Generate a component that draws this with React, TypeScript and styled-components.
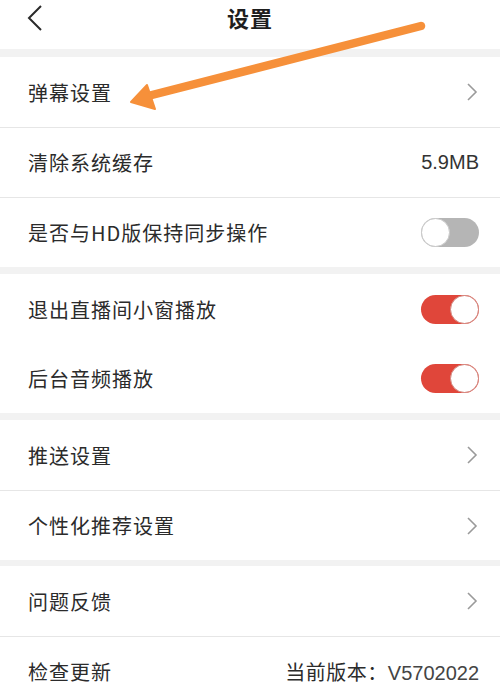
import React from "react";
import styled, { createGlobalStyle } from "styled-components";

const Global = createGlobalStyle`
  html, body { margin: 0; padding: 0; background: #ffffff; }
  body { font-family: "Noto Sans CJK SC", "Noto Sans", sans-serif; }
`;

const Page = styled.div`
  position: relative;
  width: 500px;
  height: 700px;
  overflow: hidden;
  background: #ffffff;
`;

const Header = styled.div`
  height: 49px;
  display: flex;
  align-items: flex-start;
  justify-content: center;
  position: relative;
  background: #fff;
`;

const Title = styled.div`
  font-size: 22px;
  font-weight: 700;
  color: #1e1e1e;
  line-height: 34px;
  letter-spacing: 1px;
`;

const BackButton = styled.div`
  position: absolute;
  left: 26px;
  top: 4px;
  width: 18px;
  height: 28px;
  display: flex;
`;

const Gap = styled.div<{ $h: number }>`
  height: ${(p) => p.$h}px;
  background: #f2f2f2;
`;

const Group = styled.div`
  background: #fff;
  & > div + div {
    border-top: 1px solid #e6e6e6;
  }
`;

const Row = styled.div<{ $h?: number; $noLine?: boolean }>`
  height: ${(p) => p.$h ?? 70}px;
  box-sizing: border-box;
  display: flex;
  align-items: center;
  justify-content: space-between;
  padding: 0 21px 0 28px;
  ${(p) => (p.$noLine ? "border-top: none !important;" : "")}
`;

const Label = styled.span`
  font-size: 20px;
  letter-spacing: 1px;
  color: #2b2b2b;
`;

const Value = styled.span`
  font-family: "Liberation Sans", "Noto Sans CJK SC", sans-serif;
  font-size: 20px;
  color: #333;
`;

const Version = styled.span`
  font-size: 20px;
  color: #2b2b2b;
  letter-spacing: 0.5px;
  & b {
    font-weight: 400;
    font-family: "Liberation Sans", sans-serif;
    letter-spacing: 0;
    color: #444;
  }
`;

const Track = styled.div<{ $on: boolean }>`
  width: 58px;
  height: 29px;
  border-radius: 15px;
  background: ${(p) => (p.$on ? "#e0463a" : "#b5b5b5")};
  display: flex;
  align-items: center;
  justify-content: ${(p) => (p.$on ? "flex-end" : "flex-start")};
  box-sizing: border-box;
`;

const Knob = styled.div<{ $on: boolean }>`
  width: 29px;
  height: 29px;
  border-radius: 50%;
  background: #fff;
  box-sizing: border-box;
  border: 1.5px solid ${(p) => (p.$on ? "#d2857d" : "#c9c9c9")};
`;

const ArrowLayer = styled.svg`
  position: absolute;
  left: 0;
  top: 0;
  pointer-events: none;
`;

const Chevron = () => (
  <svg width="14" height="20" viewBox="0 0 14 20">
    <path d="M3 2 L11 10 L3 18" fill="none" stroke="#9a9a9a" strokeWidth="1.6" />
  </svg>
);

const Toggle = ({ on }: { on: boolean }) => (
  <Track $on={on}>
    <Knob $on={on} />
  </Track>
);

export default function App() {
  return (
    <Page>
      <Global />
      <Header>
        <BackButton>
          <svg width="18" height="28" viewBox="0 0 18 28">
            <path d="M15 2 L3 14 L15 26" fill="none" stroke="#2a2a2a" strokeWidth="2" />
          </svg>
        </BackButton>
        <Title>设置</Title>
      </Header>
      <Gap $h={8} />
      <Group>
        <Row>
          <Label>弹幕设置</Label>
          <Chevron />
        </Row>
        <Row>
          <Label>清除系统缓存</Label>
          <Value>5.9MB</Value>
        </Row>
        <Row>
          <Label>是否与HD版保持同步操作</Label>
          <Toggle on={false} />
        </Row>
      </Group>
      <Gap $h={7} />
      <Group>
        <Row $noLine>
          <Label>退出直播间小窗播放</Label>
          <Toggle on />
        </Row>
        <Row $noLine $h={69}>
          <Label>后台音频播放</Label>
          <Toggle on />
        </Row>
      </Group>
      <Gap $h={7} />
      <Group>
        <Row>
          <Label>推送设置</Label>
          <Chevron />
        </Row>
        <Row>
          <Label>个性化推荐设置</Label>
          <Chevron />
        </Row>
      </Group>
      <Gap $h={6} />
      <Group>
        <Row>
          <Label>问题反馈</Label>
          <Chevron />
        </Row>
        <Row>
          <Label>检查更新</Label>
          <Version>
            当前版本：<b>V5702022</b>
          </Version>
        </Row>
      </Group>
      <ArrowLayer width="500" height="700" viewBox="0 0 500 700">
        <line x1="421" y1="26" x2="148" y2="96" stroke="#f6903a" strokeWidth="8.5" strokeLinecap="round" />
        <polygon points="131,102 147,85 155,109" fill="#f6903a" strokeLinejoin="round" stroke="#f6903a" strokeWidth="2" />
      </ArrowLayer>
    </Page>
  );
}
